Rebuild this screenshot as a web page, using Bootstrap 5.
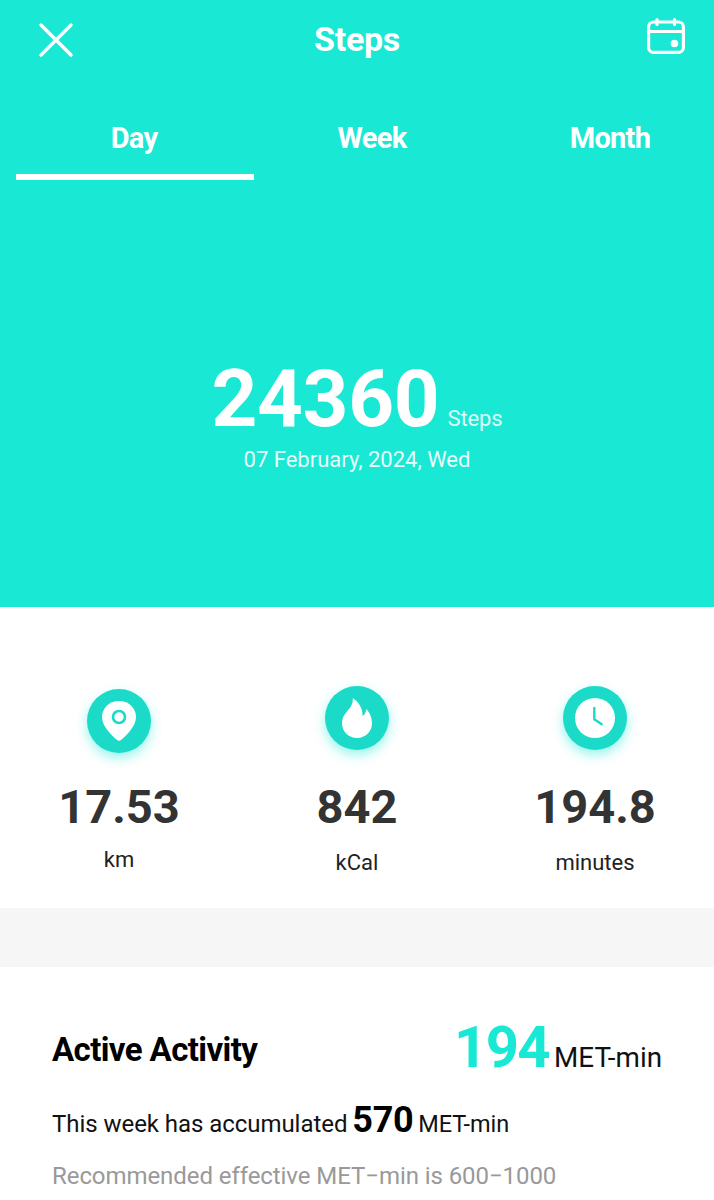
<!DOCTYPE html>
<html lang="en">
<head>
    <meta charset="UTF-8">
    <meta name="viewport" content="width=device-width, initial-scale=1.0">
    <title>Steps</title>
    <link rel="stylesheet" href="https://cdn.jsdelivr.net/npm/bootstrap@5.3.2/dist/css/bootstrap.min.css">
    <style>
        body {
            font-family: Roboto, "Liberation Sans", sans-serif;
            background-color: #fff;
            overflow: hidden;
            height: 1200px;
        }

        .hero-panel {
            background-color: #19e8d4;
            height: 607px;
            color: #fff;
        }

        .top-bar {
            height: 80px;
            padding: 0 29px 0 37px;
        }

        .top-side {
            width: 38px;
        }

        .top-side.is-raised {
            margin-bottom: 8px;
        }

        .top-title {
            font-size: 34px;
            font-weight: 700;
            line-height: 1;
            letter-spacing: -.3px;
            margin: 0 8px 2px 0;
        }

        .tab-strip {
            padding-left: 16px;
            margin-top: 20px;
            width: 730px;
        }

        .tab-item {
            width: 238px;
            height: 80px;
            padding: 20px 2px 0 0;
            font-size: 29px;
            font-weight: 700;
            line-height: 36px;
            letter-spacing: -.7px;
            text-align: center;
            color: #fff;
            text-decoration: none;
            border-bottom: 6px solid transparent;
        }

        .tab-item.is-on {
            border-bottom-color: #fff;
        }

        .hero-body {
            padding-top: 175px;
        }

        .step-count {
            font-size: 80px;
            font-weight: 700;
            line-height: 88px;
            letter-spacing: -.3px;
        }

        .step-unit {
            font-size: 22px;
            margin-left: 8px;
            letter-spacing: -.1px;
            opacity: .85;
        }

        .step-date {
            font-size: 22px;
            line-height: 30px;
            margin-top: 2px;
            opacity: .9;
        }

        .stat-row {
            padding-top: 79px;
            height: 301px;
        }

        .stat-col {
            width: 238px;
        }

        .stat-ring {
            width: 64px;
            height: 64px;
            border-radius: 50%;
            background-color: #1cdac8;
            box-shadow: 0 5px 12px rgba(25, 232, 212, .45);
        }

        .stat-ring.is-lower {
            margin-top: 3px;
            margin-bottom: -3px;
        }

        .stat-value {
            font-size: 47px;
            font-weight: 700;
            color: #333;
            line-height: 56px;
            margin-top: 29px;
        }

        .stat-label {
            font-size: 22px;
            color: #222;
            line-height: 30px;
            margin-top: 13px;
        }

        .stat-label.is-higher {
            margin-top: 10px;
        }

        .gap-band {
            background-color: #f6f6f6;
            height: 59px;
        }

        .met-block {
            padding: 49px 52px 0;
        }

        .met-title {
            font-size: 33px;
            font-weight: 700;
            color: #000;
            letter-spacing: -.6px;
            margin: 5px 0 0;
        }

        .met-big {
            font-size: 58px;
            font-weight: 700;
            color: #19e8d4;
            line-height: 62px;
            letter-spacing: -1.6px;
        }

        .met-unit {
            font-size: 27.8px;
            color: #111;
            margin-left: 5px;
        }

        .week-line {
            font-size: 24px;
            color: #111;
            margin: 19px 0 0;
            line-height: 44px;
            letter-spacing: -.05px;
        }

        .week-line b {
            font-size: 36px;
            color: #000;
            letter-spacing: -.3px;
            margin-left: -1px;
        }

        .week-unit {
            font-size: 23.5px;
            margin-left: -1px;
        }

        .hint-line {
            font-size: 24px;
            color: #999;
            margin: 14px 0 0;
            line-height: 32px;
            letter-spacing: -.07px;
        }
    </style>
</head>

<body>
    <!-- Top coloured panel -->
    <div class="hero-panel">
        <div class="top-bar d-flex align-items-center justify-content-between">
            <svg class="top-side" width="36" height="36" viewBox="0 0 36 36" fill="none" stroke="#fff" stroke-width="3.4" stroke-linecap="round">
                <path d="M3 3 L33 33 M33 3 L3 33"/>
            </svg>
            <span class="top-title">Steps</span>
            <svg class="top-side is-raised" width="38" height="36" viewBox="0 0 38 36" fill="none" stroke="#fff" stroke-width="3.2" stroke-linecap="round" stroke-linejoin="round">
                <rect x="1.6" y="4" width="34.8" height="30.4" rx="5"/>
                <path d="M2 13.5 H36 M10 1.6 V6.5 M27.500 1.6 V6.5"/>
                <circle cx="27.500" cy="25.500" r="3.800" fill="#fff" stroke="none"/>
            </svg>
        </div>

        <div class="tab-strip d-flex">
            <a class="tab-item is-on" href="#">Day</a>
            <a class="tab-item" href="#">Week</a>
            <a class="tab-item" href="#">Month</a>
        </div>

        <div class="hero-body text-center">
            <div class="d-flex justify-content-center align-items-baseline">
                <span class="step-count">24360</span><span class="step-unit">Steps</span>
            </div>
            <div class="step-date">07 February, 2024, Wed</div>
        </div>
    </div>

    <!-- Distance, calories, time -->
    <div class="stat-row d-flex text-center">
        <div class="stat-col">
            <div class="stat-ring is-lower mx-auto d-flex align-items-center justify-content-center">
                <svg width="34" height="40" viewBox="0 0 34 40">
                    <path d="M17 0 C7 0 0 7.500 0 16 C0 25 9 34 15.500 39.300 C16.400 40 17.600 40 18.500 39.300 C25 34 34 25 34 16 C34 7.500 27 0 17 0 Z" fill="#fff"/>
                    <circle cx="17" cy="16" r="6" fill="none" stroke="#1cdac8" stroke-width="2.6"/>
                </svg>
            </div>
            <div class="stat-value">17.53</div>
            <div class="stat-label is-higher">km</div>
        </div>
        <div class="stat-col">
            <div class="stat-ring mx-auto d-flex align-items-center justify-content-center">
                <svg width="30" height="40" viewBox="0 0 30 40">
                    <path d="M10.700 0 C11.500 6 8 10 4.500 14 C1.500 17.500 0 21 0 25 C0 33.500 6.500 40 15 40 C23.500 40 30 33.500 30 25.500 C30 20 28 14.500 24.200 11 C24.200 14 23 16.500 20.500 18 C21 11 17 4 10.700 0 Z" fill="#fff"/>
                </svg>
            </div>
            <div class="stat-value">842</div>
            <div class="stat-label">kCal</div>
        </div>
        <div class="stat-col">
            <div class="stat-ring mx-auto d-flex align-items-center justify-content-center">
                <svg width="40" height="40" viewBox="0 0 40 40">
                    <circle cx="20" cy="20" r="20" fill="#fff"/>
                    <path d="M19.300 10 V21.300 L26.700 26.300" fill="none" stroke="#1cdac8" stroke-width="2.400" stroke-linecap="round" stroke-linejoin="round"/>
                </svg>
            </div>
            <div class="stat-value">194.8</div>
            <div class="stat-label">minutes</div>
        </div>
    </div>

    <div class="gap-band"></div>

    <!-- Active activity summary -->
    <div class="met-block">
        <div class="d-flex justify-content-between align-items-center">
            <h2 class="met-title">Active Activity</h2>
            <div class="d-flex align-items-baseline">
                <span class="met-big">194</span><span class="met-unit">MET-min</span>
            </div>
        </div>
        <p class="week-line">This week has accumulated <b>570</b> <span class="week-unit">MET-min</span></p>
        <p class="hint-line">Recommended effective MET−min is 600−1000</p>
    </div>

    <script src="https://cdn.jsdelivr.net/npm/bootstrap@5.3.2/dist/js/bootstrap.bundle.min.js"></script>
</body>

</html>
